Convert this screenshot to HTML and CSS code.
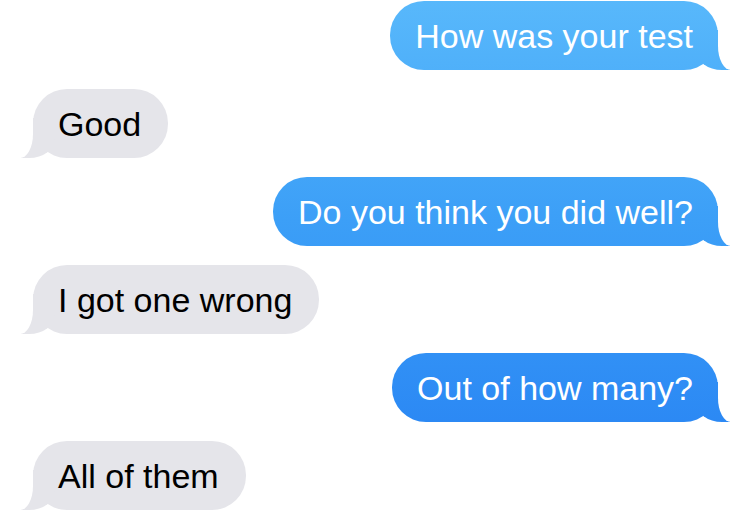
FILE: index.html
```
<!DOCTYPE html>
<html lang="en">
<head>
<meta charset="utf-8">
<title>Messages</title>
<link rel="stylesheet" href="styles.css">
</head>
<body>
<div class="thread">
  <div class="row row-sent"><div class="bubble sent">How was your test</div></div>
  <div class="row row-received"><div class="bubble received">Good</div></div>
  <div class="row row-sent"><div class="bubble sent">Do you think you did well?</div></div>
  <div class="row row-received"><div class="bubble received">I got one wrong</div></div>
  <div class="row row-sent"><div class="bubble sent">Out of how many?</div></div>
  <div class="row row-received"><div class="bubble received">All of them</div></div>
</div>
</body>
</html>
```
FILE: styles.css
```
html, body {
  margin: 0;
  padding: 0;
  background: #ffffff;
}

body {
  font-family: "Liberation Sans", Arial, sans-serif;
  width: 733px;
  height: 522px;
  overflow: hidden;
}

.thread {
  display: flex;
  flex-direction: column;
  gap: 19px;
  padding: 1px 15px 0 33px;
}

.row {
  display: flex;
}

.row-sent {
  justify-content: flex-end;
}

.row-received {
  justify-content: flex-start;
}

.bubble {
  position: relative;
  font-size: 34px;
  line-height: 41px;
  padding: 15px 25px 13px;
  border-radius: 34px;
  white-space: nowrap;
}

.sent {
  color: #ffffff;
  background: linear-gradient(to bottom, #58b8fb 0px, #3c9ff7 220px, #2b88f4 430px) fixed;
}

.received {
  color: #000000;
  background: #e5e5ea;
  padding-right: 27px;
}

.bubble::before,
.bubble::after {
  content: "";
  position: absolute;
  bottom: 0;
  height: 40px;
}

.sent::before {
  right: -12px;
  width: 34px;
  background: linear-gradient(to bottom, #58b8fb 0px, #3c9ff7 220px, #2b88f4 430px) fixed;
  border-bottom-left-radius: 26px 20px;
}

.sent::after {
  right: -40px;
  width: 40px;
  background: #ffffff;
  border-bottom-left-radius: 13px 24px;
}

.received::before {
  left: -12px;
  width: 34px;
  background: #e5e5ea;
  border-bottom-right-radius: 26px 20px;
}

.received::after {
  left: -40px;
  width: 40px;
  background: #ffffff;
  border-bottom-right-radius: 13px 24px;
}
```
